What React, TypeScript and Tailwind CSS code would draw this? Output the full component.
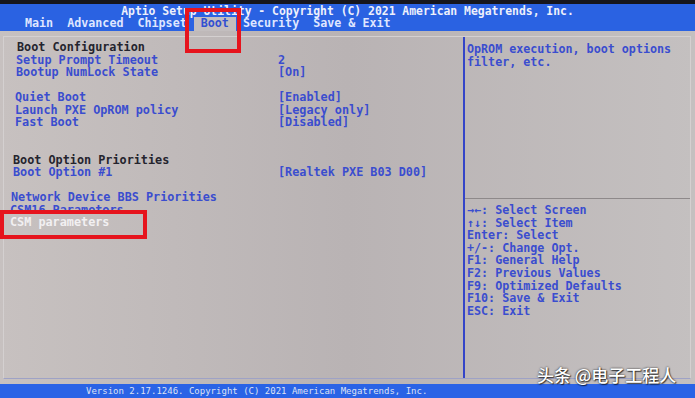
import React from "react";

const mono = "font-['DejaVu_Sans_Mono','Liberation_Mono',monospace]";

type Row = { label?: string; value?: string; kind?: "head" | "item" | "sel"; pl: string };

const rows: Row[] = [
  { label: "Boot Configuration", kind: "head", pl: "pl-[13px]" },
  { label: "Setup Prompt Timeout", value: "2", kind: "item", pl: "pl-[12px]" },
  { label: "Bootup NumLock State", value: "[On]", kind: "item", pl: "pl-[12px]" },
  { pl: "pl-[12px]" },
  { label: "Quiet Boot", value: "[Enabled]", kind: "item", pl: "pl-[11px]" },
  { label: "Launch PXE OpROM policy", value: "[Legacy only]", kind: "item", pl: "pl-[11px]" },
  { label: "Fast Boot", value: "[Disabled]", kind: "item", pl: "pl-[11px]" },
  { pl: "pl-[11px]" },
  { pl: "pl-[11px]" },
  { label: "Boot Option Priorities", kind: "head", pl: "pl-[9px]" },
  { label: "Boot Option #1", value: "[Realtek PXE B03 D00]", kind: "item", pl: "pl-[9px]" },
  { pl: "pl-[9px]" },
  { label: "Network Device BBS Priorities", kind: "item", pl: "pl-[7px]" },
  { label: "CSM16 Parameters", kind: "item", pl: "pl-[6px]" },
  { label: "CSM parameters", kind: "sel", pl: "pl-[6px]" },
];

const help = [
  "→←: Select Screen",
  "↑↓: Select Item",
  "Enter: Select",
  "+/-: Change Opt.",
  "F1: General Help",
  "F2: Previous Values",
  "F9: Optimized Defaults",
  "F10: Save & Exit",
  "ESC: Exit",
];

export default function App() {
  return (
    <div className={`relative w-[695px] h-[398px] overflow-hidden bg-[#c2bdbd] ${mono}`}>
      {/* top dark strip */}
      <div className="h-[4px] bg-[#16161d]" />
      {/* header */}
      <div className="h-[27px] bg-[#2a62e2] flex flex-col">
        <div className="h-[13px] pt-[2px] text-center text-[11.4px] leading-[11px] font-bold text-[#eef0fb] whitespace-pre">
          Aptio Setup Utility - Copyright (C) 2021 American Megatrends, Inc.
        </div>
        <div className="h-[14px] flex pl-[25px] gap-[14px] text-[11.7px] leading-[12px] font-bold text-[#dfe6ff] whitespace-pre">
          <span>Main</span>
          <span>Advanced</span>
          <span>Chipset</span>
          <span className="-mx-[7px] px-[7px] h-[14px] bg-[#c3bebf] text-[#3150d2]">Boot</span>
          <span>Security</span>
          <span>Save &amp; Exit</span>
        </div>
      </div>

      {/* body */}
      <div className="h-[353px] bg-linear-to-r from-[#c7c1c0] via-[#b9b3b4] to-[#c4c0c0] pt-[5px] pl-[3px] pr-[4px]">
        <div className="h-[343px] border border-[#d4d0d0] border-b-[#9ea2c6] flex">
          {/* left panel */}
          <div className="w-[459px] pt-[4px] text-[11.8px] font-bold whitespace-pre">
            {rows.map((r, i) => (
              <div key={i} className="flex h-[12.5px] leading-[12.5px]">
                <span
                  className={`w-[274px] ${r.pl} ${
                    r.kind === "head"
                      ? "text-[#24242e]"
                      : r.kind === "sel"
                      ? "text-[#f2f0f2]"
                      : "text-[#3a4dcf]"
                  }`}
                >
                  {r.label ?? ""}
                </span>
                <span className="text-[#3a4dcf]">{r.value ?? ""}</span>
              </div>
            ))}
          </div>
          {/* separator */}
          <div className="w-[2px] bg-[#3445c8]" />
          {/* right panel */}
          <div className="flex-1 flex flex-col text-[11.7px] font-bold text-[#3a4dcf] whitespace-pre">
            <div className="h-[161px] pt-[6px] pl-[2px] leading-[12.5px]">
              <div>OpROM execution, boot options</div>
              <div>filter, etc.</div>
            </div>
            <div className="h-[1px] bg-[#8e898a]" />
            <div className="pt-[5px] pl-[2px] leading-[12.6px]">
              {help.map((h) => (
                <div key={h}>{h}</div>
              ))}
            </div>
          </div>
        </div>
      </div>

      {/* bottom bar */}
      <div className="h-[14px] bg-[#2a63e6] pl-[86px] text-[9px] leading-[14px] text-[#dde1f4] whitespace-pre">
        Version 2.17.1246. Copyright (C) 2021 American Megatrends, Inc.
      </div>

      {/* red annotation boxes */}
      <div className="absolute left-[185px] top-[8px] w-[56px] h-[45px] border-4 border-[#e6141d]" />
      <div className="absolute left-0 top-[210px] w-[147px] h-[29px] border-4 border-[#e6141d]" />

      {/* watermark */}
      <div className="absolute left-[537px] top-[365px] text-[17px] leading-[20px] font-medium text-white font-['Noto_Sans_CJK_SC',sans-serif] [text-shadow:0_0_2px_rgba(0,0,0,0.9),1px_1px_1px_rgba(0,0,0,0.6)] whitespace-pre">
        头条 @电子工程人
      </div>
    </div>
  );
}
